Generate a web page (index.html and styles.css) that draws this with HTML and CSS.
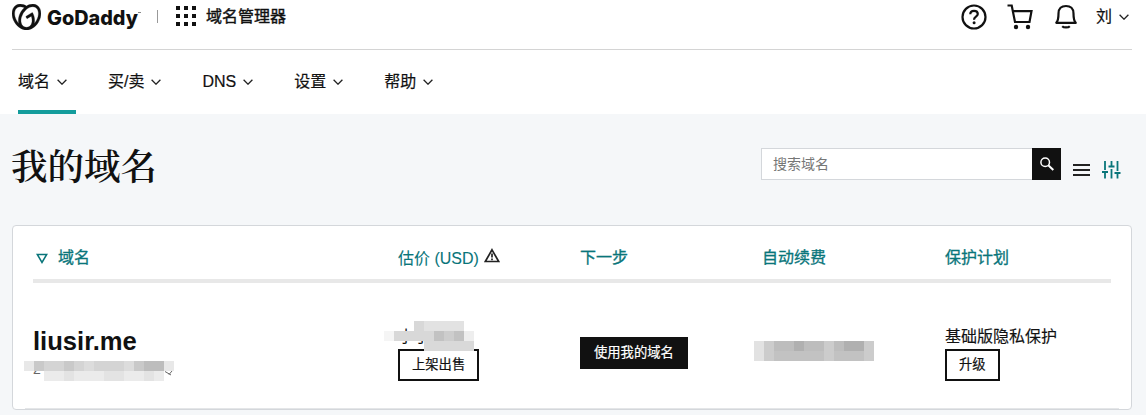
FILE: index.html
```html
<!DOCTYPE html>
<html lang="zh-CN">
<head>
<meta charset="utf-8">
<title>域名管理器</title>
<link rel="stylesheet" href="styles.css">
</head>
<body>
<svg class="defs" width="0" height="0">
  <symbol id="chevron" viewBox="0 0 10 6"><path d="M.6.8 5 5.2 9.4.8" fill="none" stroke="#222" stroke-width="1.3"/></symbol>
</svg>
<header class="top">
  <svg class="mark" viewBox="0 1.3 24 21.4"><path fill="#111" stroke="#111" stroke-width=".25" d="M20.702 2.29c-2.494-1.554-5.778-1.187-8.706.654C9.076 1.104 5.79.736 3.3 2.29c-3.941 2.463-4.42 8.806-1.07 14.167 2.47 3.954 6.333 6.269 9.77 6.226 3.439.043 7.301-2.273 9.771-6.226 3.347-5.361 2.872-11.704-1.069-14.167zM4.042 15.328a12.838 12.838 0 01-1.546-3.541 10.12 10.12 0 01-.336-3.338c.15-1.98.956-3.524 2.27-4.345 1.315-.822 3.052-.87 4.903-.137.281.113.556.24.825.382A15.11 15.11 0 007.5 7.54c-2.035 3.255-2.655 6.878-1.945 9.765a13.247 13.247 0 01-1.514-1.98zm17.465-3.541a12.866 12.866 0 01-1.547 3.54 13.25 13.25 0 01-1.513 1.984c.635-2.589.203-5.76-1.353-8.734a.39.39 0 00-.563-.153l-4.852 3.032a.397.397 0 00-.126.546l.712 1.139a.395.395 0 00.547.126l3.145-1.965c.101.306.203.606.28.916.296 1.086.41 2.214.335 3.337-.15 1.982-.956 3.525-2.27 4.347a4.437 4.437 0 01-2.25.65h-.101a4.432 4.432 0 01-2.25-.65c-1.314-.822-2.121-2.365-2.27-4.347-.074-1.123.039-2.251.335-3.337a13.212 13.212 0 014.05-6.482 10.148 10.148 0 012.849-1.765c1.845-.733 3.586-.685 4.9.137 1.316.822 2.122 2.365 2.271 4.345a10.146 10.146 0 01-.33 3.334z"/></svg>
  <svg class="wordmark" width="96" height="32"><text x="0" y="24.500" textLength="91" lengthAdjust="spacingAndGlyphs">GoDaddy</text><path d="M91 12.500h3" stroke="#888" stroke-width="1"/></svg>
  <span class="divider"></span>
  <svg class="apps" width="20" height="20" fill="#111"><path d="M0 0h4v4H0zM8 0h4v4H8zM16 0h4v4h-4zM0 8h4v4H0zM8 8h4v4H8zM16 8h4v4h-4zM0 16h4v4H0zM8 16h4v4H8zM16 16h4v4h-4z"/></svg>
  <span class="product">域名管理器</span>
  <div class="tools">
    <svg class="help" width="26" height="26" fill="none" stroke="#111" stroke-width="2.200"><circle cx="13" cy="13" r="11.500"/><path d="M9.300 10.300C9.300 8 10.900 6.800 13 6.800s3.800 1.300 3.800 3.200c0 2.600-3.700 2.600-3.700 5.200v.6"/><circle cx="13.100" cy="18.800" r="1.500" fill="#111" stroke="none"/></svg>
    <svg class="cart" width="26" height="26" fill="none" stroke="#111" stroke-width="2.200"><path d="M.5 1.500h4.200L8 18h14.500l2-10.800H5.800"/><circle cx="9" cy="23" r="2.200" fill="#111" stroke="none"/><circle cx="21" cy="23" r="2.200" fill="#111" stroke="none"/></svg>
    <svg class="bell" width="22" height="26" fill="none" stroke="#111" stroke-width="2.200"><path d="M1.300 18.800C3.300 16.500 3.500 14 3.500 9.500 3.500 4.500 6.500 2 11 2s7.500 2.500 7.500 7.500c0 4.500.2 7 2.200 9.300z" stroke-linejoin="round"/><path d="M7.200 22.200c1.600 1.600 6 1.600 7.600 0"/></svg>
    <span class="user">刘</span><svg class="chev"><use href="#chevron"/></svg>
  </div>
</header>
<nav class="nav">
  <a class="tab active">域名<svg class="chev"><use href="#chevron"/></svg></a>
  <a class="tab">买/卖<svg class="chev"><use href="#chevron"/></svg></a>
  <a class="tab">DNS<svg class="chev"><use href="#chevron"/></svg></a>
  <a class="tab">设置<svg class="chev"><use href="#chevron"/></svg></a>
  <a class="tab">帮助<svg class="chev"><use href="#chevron"/></svg></a>
</nav>
<main class="page">
  <div class="heading">
    <h1>我的域名</h1>
    <div class="search"><span class="field">搜索域名</span><span class="go"><svg width="16" height="16" fill="none" stroke="#fff" stroke-width="1.500"><circle cx="6.200" cy="6.200" r="4.300"/><path d="m9.300 9.300 5 4.700" stroke-width="2"/></svg></span></div>
    <svg class="menu" width="17" height="14" stroke="#222" stroke-width="2"><path d="M0 2h17M0 7h17M0 12h17"/></svg>
    <svg class="sliders" width="19" height="18" fill="none" stroke="#09757a" stroke-width="1.800"><path d="M3 0v9M0 11h6M3 11v6.500M9.500 0v5M6.500 5.500h6M9.500 8v9.500M15.500 0v10M12.500 12h6M15.500 12v5.500"/></svg>
  </div>
  <section class="card">
    <div class="row labels">
      <div><svg class="sort" width="12" height="11" fill="none" stroke="#09757a" stroke-width="1.500"><path d="M1.300 1.500h9.400L6 9.500z"/></svg>域名</div>
      <div><span class="usd">估价 (USD)</span><svg class="warn" width="16" height="15" fill="none" stroke="#222" stroke-width="1.700"><path d="M8 1.800 14.700 13.500H1.300z"/><path d="M8 5.500v4M8 10.500v1.700"/></svg></div>
      <div>下一步</div>
      <div>自动续费</div>
      <div>保护计划</div>
    </div>
    <div class="row record">
      <div class="name-cell"><strong>liusir.me</strong><div class="meta"><span>2</span><svg class="pencil" width="9" height="6" fill="none" stroke="#666"><path d="M1 1.500 7 5M5 4.500 8 1"/></svg>
        <svg class="mask mask-meta" width="150" height="20" shape-rendering="crispEdges"><path fill="#e8e8e8" d="M0 0h10v10H0zM140 0h10v10h-10z"/><path fill="#d4d4d4" d="M10 0h130v10H10z"/><path fill="#c9c9c9" d="M10 0h10v10H10zM40 0h10v10H40zM110 0h10v10h-10z"/><path fill="#bdbdbd" d="M120 0h20v10h-20z"/><path fill="#dcdcdc" d="M60 0h10v10H60zM100 0h10v10h-10z"/><path fill="#ebebeb" d="M20 10h120v10H20z"/><path fill="#e3e3e3" d="M40 10h10v10H40zM80 10h20v10H80zM120 10h10v10h-10z"/></svg></div></div>
      <div class="price-cell"><div class="price">小于
        <svg class="mask mask-price" width="90" height="30" shape-rendering="crispEdges"><path fill="#d8d8d8" d="M30 0h10v10H30z"/><path fill="#e2e2e2" d="M40 0h40v10H40z"/><path fill="#f5f5f5" d="M0 10h10v10H0z"/><path fill="#d8d8d8" d="M10 10h40v10H10z"/><path fill="#c2c2c2" d="M50 10h10v10H50zM70 10h10v10H70z"/><path fill="#cdcdcd" d="M60 10h10v10H60z"/><path fill="#eee" d="M80 10h10v10H80z"/><path fill="#d9d9d9" d="M40 20h50v10H40z"/></svg></div><a class="btn">上架出售</a></div>
      <div class="next-cell"><a class="btn solid">使用我的域名</a></div>
      <div class="renew-cell"><svg width="120" height="20" shape-rendering="crispEdges"><path fill="#e2e2e2" d="M0 0h10v20H0z"/><path fill="#ccc" d="M10 0h110v20H10z"/><path fill="#bdbdbd" d="M20 0h50v10H20zM80 0h30v10H80z"/><path fill="#c2c2c2" d="M20 10h50v10H20zM80 10h30v10H80z"/><path fill="#b0b0b0" d="M40 0h10v10H40zM90 0h20v10H90z"/></svg></div>
      <div class="plan-cell"><div class="plan">基础版隐私保护</div><a class="btn">升级</a></div>
    </div>
  </section>
</main>
</body>
</html>
```
FILE: styles.css
```css
* { box-sizing: border-box; }
body { margin: 0; height: 415px; overflow: hidden; background: #fff; color: #111; font: 16px/24px "Liberation Sans", "Noto Sans CJK SC", sans-serif; }
svg { display: block; flex: none; }
.defs { position: absolute; }
.top { display: flex; align-items: flex-start; height: 50px; margin: 0 14px 0 12px; border-bottom: 1px solid #d4d4d4; }
.mark { width: 29px; height: 26px; margin-top: 4px; }
.wordmark { margin-left: 6px; }
.wordmark text { font: 800 20px Inter, sans-serif; fill: #111; }
.divider { width: 1px; height: 13px; margin: 10px 0 0 14px; background: #999; }
.apps { margin: 6px 0 0 18px; }
.product { margin: 5px 0 0 10px; -webkit-text-stroke: .4px #111; }
.tools { display: flex; align-items: flex-start; margin-left: auto; padding-right: 3px; }
.help, .cart, .bell { margin-top: 4px; }
.cart { margin-left: 20px; }
.bell { margin-left: 22px; }
.user { margin: 5px 7px 0 19px; -webkit-text-stroke: .2px #111; }
.chev { width: 10px; height: 6px; }
.tools .chev { margin-top: 14px; }
.nav { display: flex; gap: 32px; height: 64px; padding-left: 18px; }
.tab { display: flex; align-items: center; gap: 7px; padding: 4px 9px 0 0; border-bottom: 4px solid transparent; -webkit-text-stroke: .2px #111; }
.tab.active { border-color: #139c9c; }
.tab .chev { margin-top: -1px; }
.page { height: 301px; padding: 0 14px 0 12px; background: #f5f7f9; }
.heading { display: flex; align-items: flex-start; height: 111px; }
h1 { margin: 24px auto 0 -1px; font: 600 36.5px/52px "Noto Serif CJK SC", "Noto Sans CJK SC", serif; }
.search { display: flex; width: 300px; height: 32px; margin-top: 34px; }
.field { flex: 1; padding-left: 11px; border: 1px solid #d4d7db; border-right: 0; background: #fff; color: #767676; font-size: 14px; line-height: 30px; }
.go { display: grid; place-items: center; width: 29px; background: #111; }
.menu { margin: 49px 0 0 12px; }
.sliders { margin: 47px 11px 0 12px; }
.card { height: 185px; padding: 0 20px; border: 1px solid #d4d7db; border-radius: 4px; background: #fff; }
.row { display: grid; grid-template-columns: 365px 182px 182px 183px 1fr; }
.labels { height: 57px; padding-top: 20px; border-bottom: 4px solid #e8e8e8; color: #09757a; -webkit-text-stroke: .3px #09757a; }
.labels > div { display: flex; }
.sort { margin: 7px 10px 0 3px; }
.usd { padding-top: 1px; -webkit-text-stroke-width: .1px; }
.warn { margin: 2px 0 0 5px; }
.record { height: 126px; margin: 0 -8px; padding: 0 8px; border-bottom: 1px solid #e4e6e8; }
.record strong { display: block; margin-top: 44px; font-size: 25.6px; line-height: 28px; }
.meta { position: relative; height: 24px; color: #666; font-size: 14px; line-height: 28px; }
.pencil { position: absolute; left: 131px; top: 15px; }
.mask { position: absolute; }
.mask-meta { left: -9px; top: 6px; }
.price-cell, .plan-cell { padding-top: 41px; }
.price { position: relative; height: 25px; line-height: 26px; }
.mask-price { left: -14px; top: -3px; }
.plan { height: 25px; line-height: 26px; -webkit-text-stroke: .15px #111; }
.btn { display: inline-block; height: 32px; padding: 0 12px; border: 2px solid #111; font-size: 13.3px; line-height: 27px; -webkit-text-stroke: .2px currentColor; }
.btn.solid { background: #111; color: #fff; }
.next-cell { padding-top: 54px; }
.renew-cell { padding-top: 58px; }
.renew-cell svg { margin-left: -8px; }
```
